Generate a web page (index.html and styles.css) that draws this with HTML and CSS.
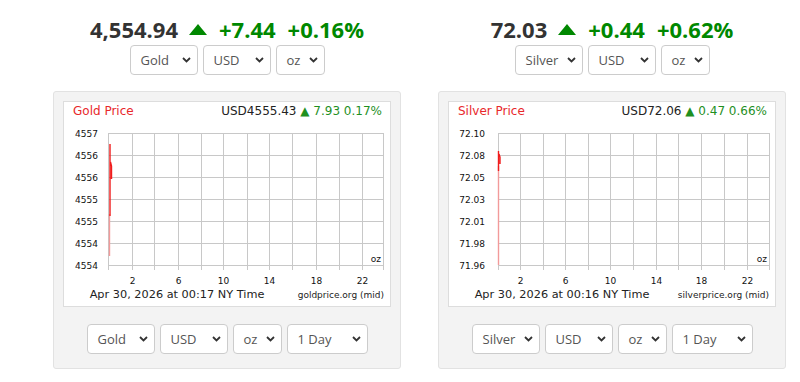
FILE: index.html
```html
<!DOCTYPE html>
<html lang="en">
<head>
    <meta charset="UTF-8">
    <meta name="viewport" content="width=device-width, initial-scale=1.0">
    <title>Gold and Silver Price</title>
    <link rel="stylesheet" href="styles.css">
</head>
<body>
    <div class="page">
        <!-- Gold -->
        <div class="col">
            <div class="quote"><span class="price">4,554.94</span><svg class="up" viewBox="0 0 18 11"><path d="M9 0 L18 11 L0 11 Z" fill="#080"/></svg><span class="chg">+7.44</span><span class="chg pct">+0.16%</span></div>
            <div class="picks">
                <div class="pick w-metal"><span>Gold</span><svg class="chev" viewBox="0 0 9 6"><path d="M1 1 L4.5 4.5 L8 1" /></svg></div>
                <div class="pick w-cur"><span>USD</span><svg class="chev" viewBox="0 0 9 6"><path d="M1 1 L4.5 4.5 L8 1" /></svg></div>
                <div class="pick w-unit"><span>oz</span><svg class="chev" viewBox="0 0 9 6"><path d="M1 1 L4.5 4.5 L8 1" /></svg></div>
            </div>
            <div class="panel">
                <div class="chart">
                    <div class="chart-head">
                        <span class="chart-title">Gold Price</span>
                        <span class="chart-now">USD4555.43 <span class="chart-chg">▲ 7.93 0.17%</span></span>
                    </div>
                    <svg class="plot" width="326" height="162" viewBox="0 0 326 162">
                        <path class="grid" d="M44 7.5H320 M44 29.5H320 M44 51.5H320 M44 73.5H320 M44 95.5H320 M44 117.5H320 M44 139.5H320
                            M44.5 7V144 M68.5 7V144 M90.5 7V144 M114.5 7V144 M137.5 7V144 M159.5 7V144 M183.5 7V144
                            M205.5 7V144 M228.5 7V144 M252.5 7V144 M275.5 7V144 M298.5 7V144 M319.5 7V144"/>
                        <g class="ylab">
                            <text x="34" y="11">4557</text>
                            <text x="34" y="33">4556</text>
                            <text x="34" y="55">4556</text>
                            <text x="34" y="77">4555</text>
                            <text x="34" y="99">4555</text>
                            <text x="34" y="121">4554</text>
                            <text x="34" y="143">4554</text>
                        </g>
                        <g class="xlab">
                            <text x="68.5" y="158">2</text>
                            <text x="114.5" y="158">6</text>
                            <text x="159.5" y="158">10</text>
                            <text x="205.5" y="158">14</text>
                            <text x="252.5" y="158">18</text>
                            <text x="298.5" y="158">22</text>
                        </g>
                        <text class="unit" x="317" y="136">oz</text>
                        <path class="line-soft" d="M45.5 88V130"/>
                        <path class="line" d="M46 18V90 M46.5 36L47.5 40V53"/>
                    </svg>
                    <div class="chart-foot">
                        <span class="stamp">Apr 30, 2026 at 00:17 NY Time</span>
                        <span class="src">goldprice.org (mid)</span>
                    </div>
                </div>
                <div class="picks">
                    <div class="pick w-metal"><span>Gold</span><svg class="chev" viewBox="0 0 9 6"><path d="M1 1 L4.5 4.5 L8 1" /></svg></div>
                    <div class="pick w-cur"><span>USD</span><svg class="chev" viewBox="0 0 9 6"><path d="M1 1 L4.5 4.5 L8 1" /></svg></div>
                    <div class="pick w-unit"><span>oz</span><svg class="chev" viewBox="0 0 9 6"><path d="M1 1 L4.5 4.5 L8 1" /></svg></div>
                    <div class="pick w-range"><span>1 Day</span><svg class="chev" viewBox="0 0 9 6"><path d="M1 1 L4.5 4.5 L8 1" /></svg></div>
                </div>
            </div>
        </div>

        <!-- Silver -->
        <div class="col">
            <div class="quote"><span class="price">72.03</span><svg class="up" viewBox="0 0 18 11"><path d="M9 0 L18 11 L0 11 Z" fill="#080"/></svg><span class="chg">+0.44</span><span class="chg pct">+0.62%</span></div>
            <div class="picks">
                <div class="pick w-metal"><span>Silver</span><svg class="chev" viewBox="0 0 9 6"><path d="M1 1 L4.5 4.5 L8 1" /></svg></div>
                <div class="pick w-cur"><span>USD</span><svg class="chev" viewBox="0 0 9 6"><path d="M1 1 L4.5 4.5 L8 1" /></svg></div>
                <div class="pick w-unit"><span>oz</span><svg class="chev" viewBox="0 0 9 6"><path d="M1 1 L4.5 4.5 L8 1" /></svg></div>
            </div>
            <div class="panel">
                <div class="chart">
                    <div class="chart-head">
                        <span class="chart-title">Silver Price</span>
                        <span class="chart-now">USD72.06 <span class="chart-chg">▲ 0.47 0.66%</span></span>
                    </div>
                    <svg class="plot" width="326" height="162" viewBox="0 0 326 162">
                        <path class="grid" d="M49 7.5H321 M49 29.5H321 M49 51.5H321 M49 73.5H321 M49 95.5H321 M49 117.5H321 M49 139.5H321
                            M49.5 7V144 M71.5 7V144 M94.5 7V144 M116.5 7V144 M139.5 7V144 M161.5 7V144 M184.5 7V144
                            M207.5 7V144 M229.5 7V144 M252.5 7V144 M275.5 7V144 M298.5 7V144 M320.5 7V144"/>
                        <g class="ylab">
                            <text x="36" y="11">72.10</text>
                            <text x="36" y="33">72.08</text>
                            <text x="36" y="55">72.05</text>
                            <text x="36" y="77">72.03</text>
                            <text x="36" y="99">72.01</text>
                            <text x="36" y="121">71.98</text>
                            <text x="36" y="143">71.96</text>
                        </g>
                        <g class="xlab">
                            <text x="71.5" y="158">2</text>
                            <text x="116.5" y="158">6</text>
                            <text x="161.5" y="158">10</text>
                            <text x="207.5" y="158">14</text>
                            <text x="252.5" y="158">18</text>
                            <text x="298.5" y="158">22</text>
                        </g>
                        <text class="unit" x="318" y="136">oz</text>
                        <path class="line-soft" d="M49.5 40V139"/>
                        <path class="line" d="M49.5 25V45 M50 28L51 31V38"/>
                    </svg>
                    <div class="chart-foot">
                        <span class="stamp">Apr 30, 2026 at 00:16 NY Time</span>
                        <span class="src">silverprice.org (mid)</span>
                    </div>
                </div>
                <div class="picks">
                    <div class="pick w-metal"><span>Silver</span><svg class="chev" viewBox="0 0 9 6"><path d="M1 1 L4.5 4.5 L8 1" /></svg></div>
                    <div class="pick w-cur"><span>USD</span><svg class="chev" viewBox="0 0 9 6"><path d="M1 1 L4.5 4.5 L8 1" /></svg></div>
                    <div class="pick w-unit"><span>oz</span><svg class="chev" viewBox="0 0 9 6"><path d="M1 1 L4.5 4.5 L8 1" /></svg></div>
                    <div class="pick w-range"><span>1 Day</span><svg class="chev" viewBox="0 0 9 6"><path d="M1 1 L4.5 4.5 L8 1" /></svg></div>
                </div>
            </div>
        </div>
    </div>
</body>
</html>
```
FILE: styles.css
```css
/* General */
body {
    margin: 0;
    background: #fff;
    font-family: "Open Sans", Arial, sans-serif;
}
.page {
    display: flex;
    gap: 37px;
    padding: 14px 0 0 53px;
}
.col {
    width: 348px;
    display: flex;
    flex-direction: column;
    align-items: center;
}

/* Big quote line */
.quote {
    white-space: nowrap;
    font-size: 22px;
    font-weight: 700;
    line-height: 30px;
}
.price {
    color: #333;
}
.up {
    width: 18px;
    height: 11px;
    margin: 0 12px 0 11px;
    vertical-align: 3px;
}
.chg {
    color: #080;
}
.pct {
    margin-left: 12px;
}

/* Dropdowns */
.picks {
    display: flex;
    gap: 5px;
    margin-top: 1px;
}
.pick {
    height: 30px;
    box-sizing: border-box;
    display: flex;
    align-items: center;
    justify-content: space-between;
    padding: 0 6px 0 10px;
    background: #fff;
    border: 1px solid #ccc;
    border-radius: 4px;
    font-size: 13px;
    color: #555;
}
.w-metal { width: 68px; }
.w-cur { width: 68px; }
.w-unit { width: 49px; }
.w-range { width: 81px; }
.chev {
    width: 9px;
    height: 6px;
    fill: none;
    stroke: #333;
    stroke-width: 1.8;
}

/* Chart panel */
.panel {
    width: 348px;
    box-sizing: border-box;
    margin-top: 16px;
    padding: 9px 9px 14px;
    background: #f3f3f3;
    border: 1px solid #e2e2e2;
    border-radius: 3px;
}
.panel .picks {
    justify-content: center;
    margin-top: 17px;
}
.chart {
    height: 206px;
    box-sizing: border-box;
    background: #fff;
    border: 1px solid #ddd;
    font-family: "DejaVu Sans", Verdana, sans-serif;
}
.chart-head {
    height: 24px;
    box-sizing: border-box;
    display: flex;
    justify-content: space-between;
    padding: 2px 8px 0 9px;
    font-size: 12px;
    line-height: 15px;
}
.chart-title {
    color: #e8282b;
}
.chart-now {
    color: #222;
}
.chart-chg {
    color: #1f901f;
}
.plot {
    display: block;
}
.plot .grid {
    fill: none;
    stroke: #c8c8c8;
    stroke-width: 1;
}
.plot text {
    font-family: "DejaVu Sans", Verdana, sans-serif;
    font-size: 9px;
    fill: #111;
}
.plot .ylab text {
    text-anchor: end;
}
.plot .xlab text {
    text-anchor: middle;
}
.plot .unit {
    text-anchor: end;
}
.plot .line {
    fill: none;
    stroke: #f01c1c;
    stroke-width: 1.4;
}
.plot .line-soft {
    fill: none;
    stroke: #f29a9a;
    stroke-width: 1.4;
}
.chart-foot {
    height: 18px;
    display: flex;
    justify-content: space-between;
    align-items: flex-start;
    padding-right: 6px;
    line-height: 14px;
    color: #222;
}
.stamp {
    width: 226px;
    text-align: center;
    font-size: 11.3px;
}
.src {
    font-size: 9px;
    line-height: 14px;
}
```
